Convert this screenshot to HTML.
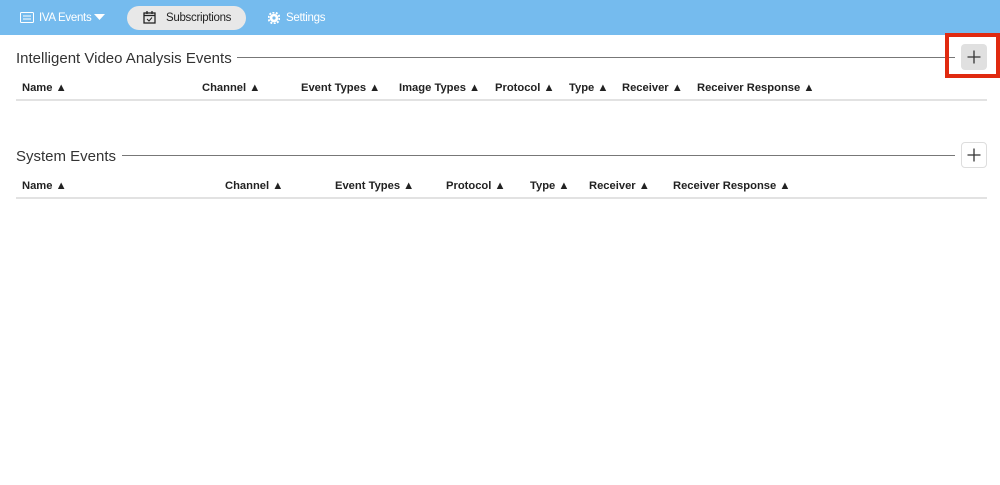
<!DOCTYPE html>
<html><head><style>
body{margin:0;width:1000px;height:485px;background:#fff;font-family:"Liberation Sans",sans-serif;position:relative;overflow:hidden}
.hdr{position:absolute;left:0;top:0;width:1000px;height:35px;background:#75bbee}
.hdr span{position:absolute;top:12px;font-size:11.5px;color:#fff;letter-spacing:-0.3px}
.pill{position:absolute;left:127px;top:6px;width:119px;height:24px;border-radius:12px;background:#e8e8e8}
.t{position:absolute;font-size:15px;color:#333}
.line{position:absolute;height:1px;background:#777}
.hl{position:absolute;height:2px;background:#e2e2e2;left:16px;width:971px}
.c{position:absolute;font-size:11.2px;font-weight:bold;color:#222}
.btn{position:absolute;width:26px;height:26px;border-radius:4px;box-sizing:border-box}
.btn svg{position:absolute;left:5px;top:5px}
</style></head><body>
<div class="hdr">
<svg style="position:absolute;left:20px;top:12px" width="14" height="11"><rect x="0.5" y="0.5" width="13" height="10" rx="1" fill="none" stroke="#fff"/><line x1="3" y1="4" x2="11" y2="4" stroke="#fff"/><line x1="3" y1="7" x2="11" y2="7" stroke="#fff"/></svg>
<span style="left:39px">IVA Events</span>
<svg style="position:absolute;left:94px;top:14px" width="11" height="7"><path d="M0 0H11L5.5 6Z" fill="#fff"/></svg>
<div class="pill"></div>
<svg style="position:absolute;left:143px;top:11px" width="13" height="13"><rect x="1" y="2" width="11" height="10" fill="none" stroke="#222" stroke-width="1.3"/><line x1="1" y1="4.5" x2="12" y2="4.5" stroke="#222" stroke-width="1.3"/><line x1="4" y1="0" x2="4" y2="3" stroke="#222" stroke-width="1.3"/><line x1="9" y1="0" x2="9" y2="3" stroke="#222" stroke-width="1.3"/><path d="M4 8l2 2 3-3.5" fill="none" stroke="#222"/></svg>
<span style="left:166px;color:#222">Subscriptions</span>
<svg style="position:absolute;left:268px;top:12px" width="12" height="12"><circle cx="6" cy="6" r="4.3" fill="#fff"/><circle cx="6" cy="6" r="5.5" fill="none" stroke="#fff" stroke-width="2" stroke-dasharray="2 1.45"/><circle cx="6" cy="6" r="1.6" fill="#75bbee"/></svg>
<span style="left:286px">Settings</span>
</div>

<div class="t" style="left:16px;top:50px">Intelligent Video Analysis Events</div>
<div class="line" style="left:237px;top:57px;width:718px"></div>
<div style="position:absolute;left:945px;top:33px;width:55px;height:45px;box-sizing:border-box;border:4px solid #e02a10"></div>
<div class="btn" style="left:961px;top:44px;background:#e0e0e0"><svg width="16" height="16"><path d="M8 1.5V14.5M1.5 8H14.5" stroke="#333" stroke-width="1.3"/></svg></div>
<div class="c" style="left:22px;top:82px">Name ▲</div>
<div class="c" style="left:202px;top:82px">Channel ▲</div>
<div class="c" style="left:301px;top:82px">Event Types ▲</div>
<div class="c" style="left:399px;top:82px">Image Types ▲</div>
<div class="c" style="left:495px;top:82px">Protocol ▲</div>
<div class="c" style="left:569px;top:82px">Type ▲</div>
<div class="c" style="left:622px;top:82px">Receiver ▲</div>
<div class="c" style="left:697px;top:82px">Receiver Response ▲</div>
<div class="hl" style="top:99px"></div>

<div class="t" style="left:16px;top:148px">System Events</div>
<div class="line" style="left:122px;top:155px;width:833px"></div>
<div class="btn" style="left:961px;top:142px;border:1px solid #ddd;background:#fff"><svg width="16" height="16" style="left:4px;top:4px"><path d="M8 1.5V14.5M1.5 8H14.5" stroke="#333" stroke-width="1.3"/></svg></div>
<div class="c" style="left:22px;top:180px">Name ▲</div>
<div class="c" style="left:225px;top:180px">Channel ▲</div>
<div class="c" style="left:335px;top:180px">Event Types ▲</div>
<div class="c" style="left:446px;top:180px">Protocol ▲</div>
<div class="c" style="left:530px;top:180px">Type ▲</div>
<div class="c" style="left:589px;top:180px">Receiver ▲</div>
<div class="c" style="left:673px;top:180px">Receiver Response ▲</div>
<div class="hl" style="top:197px"></div>
</body></html>
